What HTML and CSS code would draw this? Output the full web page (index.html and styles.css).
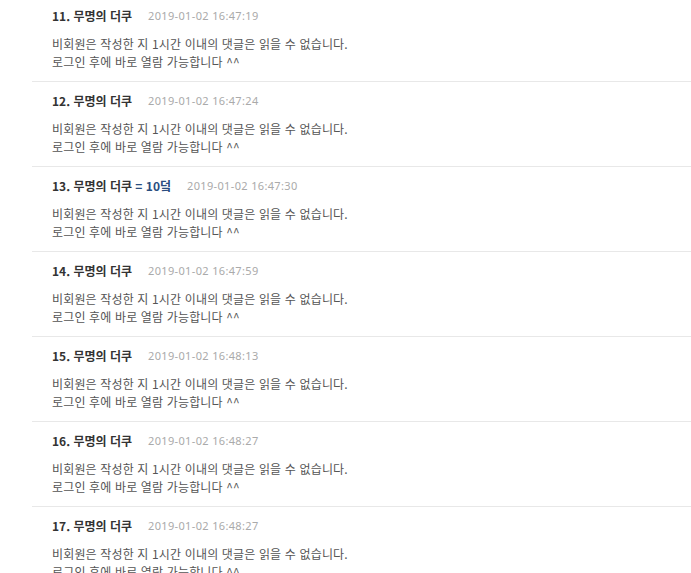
FILE: index.html
```html
<!DOCTYPE html>
<html lang="ko">
<head>
<meta charset="utf-8">
<link rel="stylesheet" href="styles.css">
</head>
<body>
<ul class="comments">
  <li class="comment">
    <div class="meta"><span class="name">11. 무명의 더쿠</span><span class="date">2019-01-02 16:47:19</span></div>
    <p class="text">비회원은 작성한 지 1시간 이내의 댓글은 읽을 수 없습니다.<br>로그인 후에 바로 열람 가능합니다 ^^</p>
  </li>
  <li class="comment">
    <div class="meta"><span class="name">12. 무명의 더쿠</span><span class="date">2019-01-02 16:47:24</span></div>
    <p class="text">비회원은 작성한 지 1시간 이내의 댓글은 읽을 수 없습니다.<br>로그인 후에 바로 열람 가능합니다 ^^</p>
  </li>
  <li class="comment">
    <div class="meta"><span class="name">13. 무명의 더쿠 <span class="ref">= 10덬</span></span><span class="date">2019-01-02 16:47:30</span></div>
    <p class="text">비회원은 작성한 지 1시간 이내의 댓글은 읽을 수 없습니다.<br>로그인 후에 바로 열람 가능합니다 ^^</p>
  </li>
  <li class="comment">
    <div class="meta"><span class="name">14. 무명의 더쿠</span><span class="date">2019-01-02 16:47:59</span></div>
    <p class="text">비회원은 작성한 지 1시간 이내의 댓글은 읽을 수 없습니다.<br>로그인 후에 바로 열람 가능합니다 ^^</p>
  </li>
  <li class="comment">
    <div class="meta"><span class="name">15. 무명의 더쿠</span><span class="date">2019-01-02 16:48:13</span></div>
    <p class="text">비회원은 작성한 지 1시간 이내의 댓글은 읽을 수 없습니다.<br>로그인 후에 바로 열람 가능합니다 ^^</p>
  </li>
  <li class="comment">
    <div class="meta"><span class="name">16. 무명의 더쿠</span><span class="date">2019-01-02 16:48:27</span></div>
    <p class="text">비회원은 작성한 지 1시간 이내의 댓글은 읽을 수 없습니다.<br>로그인 후에 바로 열람 가능합니다 ^^</p>
  </li>
  <li class="comment">
    <div class="meta"><span class="name">17. 무명의 더쿠</span><span class="date">2019-01-02 16:48:27</span></div>
    <p class="text">비회원은 작성한 지 1시간 이내의 댓글은 읽을 수 없습니다.<br>로그인 후에 바로 열람 가능합니다 ^^</p>
  </li>
</ul>
</body>
</html>
```

FILE: styles.css
```css
html, body {
  margin: 0;
  padding: 0;
  background: #fff;
  overflow: hidden;
}
body {
  font-family: "Noto Sans CJK KR", "Noto Sans", sans-serif;
  color: #555;
}
.comments {
  list-style: none;
  margin: -3px 0 0 32px;
  padding: 0;
}
.comment {
  padding: 10px 0 10px 20px;
  border-bottom: 1px solid #e8e8e8;
}
.meta {
  display: flex;
  align-items: center;
  gap: 16px;
  height: 18px;
  line-height: 18px;
  margin-bottom: 10px;
}
.name {
  font-size: 12px;
  font-weight: bold;
  color: #333;
}
.ref {
  color: #2a4d7f;
}
.date {
  font-family: "Noto Sans", "Noto Sans CJK KR", sans-serif;
  font-size: 11px;
  letter-spacing: 0.35px;
  color: #aaa;
}
.text {
  margin: 0;
  font-size: 12px;
  line-height: 18px;
  letter-spacing: 0.15px;
  color: #555;
}
```
